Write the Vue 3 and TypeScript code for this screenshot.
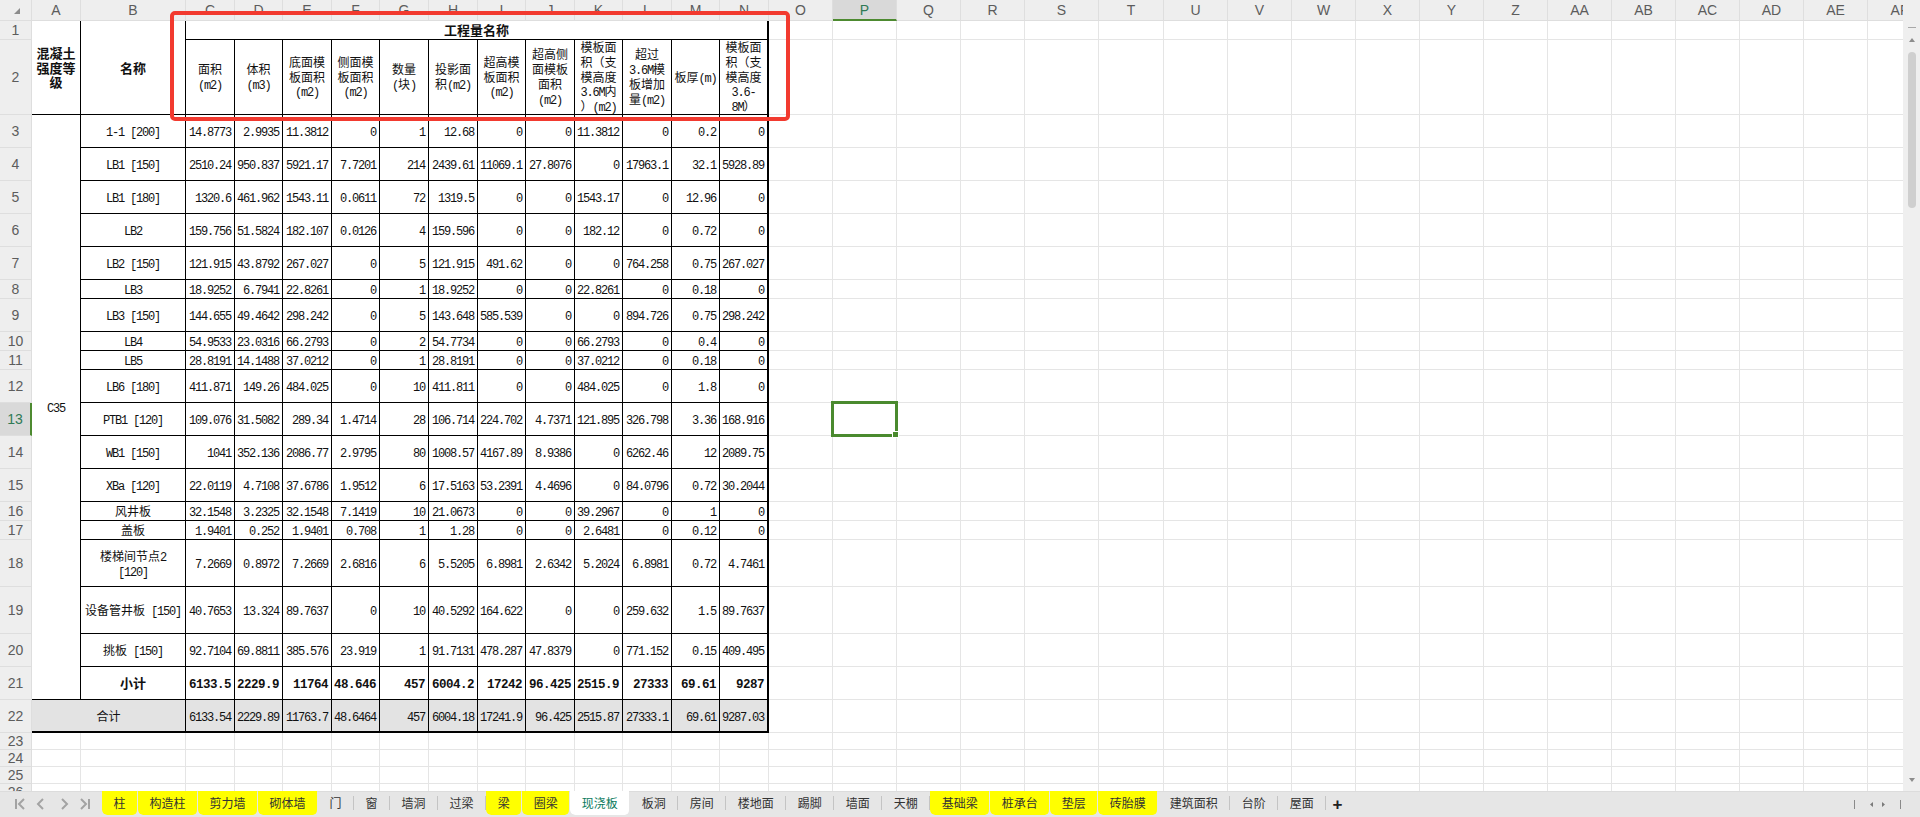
<script setup lang="ts">
interface Cell {
  lines: string[]
  cls: string
  colspan?: number
  rowspan?: number
}

const colNames = 'A B C D E F G H I J K L M N O P Q R S T U V W X Y Z AA AB AC AD AE AF'.split(' ')
const colWidths = [49, 105, 49, 48, 49, 48, 49, 49, 48, 49, 48, 49, 48, 49, 64, 64, 64, 64, 74, 65, 64, 64, 64, 64, 64, 64, 64, 64, 64, 64, 64, 64]
const rowHeights = [19, 75, 33, 33, 33, 33, 33, 19, 33, 19, 19, 33, 33, 33, 33, 19, 19, 47, 47, 33, 33, 33, 17, 17, 17, 17]

const heads: string[][] = [
  ['面积', '(m2)'],
  ['体积', '(m3)'],
  ['底面模', '板面积', '(m2)'],
  ['侧面模', '板面积', '(m2)'],
  ['数量', '(块)'],
  ['投影面', '积(m2)'],
  ['超高模', '板面积', '(m2)'],
  ['超高侧', '面模板', '面积', '(m2)'],
  ['模板面', '积（支', '模高度', '3.6M内', '）(m2)'],
  ['超过', '3.6M模', '板增加', '量(m2)'],
  ['板厚(m)'],
  ['模板面', '积（支', '模高度', '3.6-', '8M）'],
]

const body: [string[], string][] = [
  [['1-1 [200]'], '14.8773 2.9935 11.3812 0 1 12.68 0 0 11.3812 0 0.2 0'],
  [['LB1 [150]'], '2510.24 950.837 5921.17 7.7201 214 2439.61 11069.1 27.8076 0 17963.1 32.1 5928.89'],
  [['LB1 [180]'], '1320.6 461.962 1543.11 0.0611 72 1319.5 0 0 1543.17 0 12.96 0'],
  [['LB2'], '159.756 51.5824 182.107 0.0126 4 159.596 0 0 182.12 0 0.72 0'],
  [['LB2 [150]'], '121.915 43.8792 267.027 0 5 121.915 491.62 0 0 764.258 0.75 267.027'],
  [['LB3'], '18.9252 6.7941 22.8261 0 1 18.9252 0 0 22.8261 0 0.18 0'],
  [['LB3 [150]'], '144.655 49.4642 298.242 0 5 143.648 585.539 0 0 894.726 0.75 298.242'],
  [['LB4'], '54.9533 23.0316 66.2793 0 2 54.7734 0 0 66.2793 0 0.4 0'],
  [['LB5'], '28.8191 14.1488 37.0212 0 1 28.8191 0 0 37.0212 0 0.18 0'],
  [['LB6 [180]'], '411.871 149.26 484.025 0 10 411.811 0 0 484.025 0 1.8 0'],
  [['PTB1 [120]'], '109.076 31.5082 289.34 1.4714 28 106.714 224.702 4.7371 121.895 326.798 3.36 168.916'],
  [['WB1 [150]'], '1041 352.136 2086.77 2.9795 80 1008.57 4167.89 8.9386 0 6262.46 12 2089.75'],
  [['XBa [120]'], '22.0119 4.7108 37.6786 1.9512 6 17.5163 53.2391 4.4696 0 84.0796 0.72 30.2044'],
  [['风井板'], '32.1548 3.2325 32.1548 7.1419 10 21.0673 0 0 39.2967 0 1 0'],
  [['盖板'], '1.9401 0.252 1.9401 0.708 1 1.28 0 0 2.6481 0 0.12 0'],
  [['楼梯间节点2', '[120]'], '7.2669 0.8972 7.2669 2.6816 6 5.5205 6.8981 2.6342 5.2024 6.8981 0.72 4.7461'],
  [['设备管井板 [150]'], '40.7653 13.324 89.7637 0 10 40.5292 164.622 0 0 259.632 1.5 89.7637'],
  [['挑板 [150]'], '92.7104 69.8811 385.576 23.919 1 91.7131 478.287 47.8379 0 771.152 0.15 409.495'],
  [['小计'], '6133.5 2229.9 11764 48.646 457 6004.2 17242 96.425 2515.9 27333 69.61 9287'],
]
const total = '6133.54 2229.89 11763.7 48.6464 457 6004.18 17241.9 96.425 2515.87 27333.1 69.61 9287.03'

const blanks = (n: number): Cell[] => Array.from({ length: n }, () => ({ lines: [], cls: 'blank' }))
const numCells = (vals: string, extra: string): Cell[] =>
  vals.split(' ').map((v, i) => ({ lines: [v], cls: `data num ${extra} ${i === 11 ? 'edge' : ''}` }))

const rows: Cell[][] = [
  [
    { lines: ['混凝土', '强度等', '级'], cls: 'data strong', rowspan: 2 },
    { lines: ['名称'], cls: 'data strong', rowspan: 2 },
    { lines: ['工程量名称'], cls: 'data strong edge', colspan: 12 },
    ...blanks(18),
  ],
  [...heads.map((lines, i) => ({ lines, cls: `data head ${i === 11 ? 'edge' : ''}` })), ...blanks(18)],
  ...body.map(([name, vals], i) => {
    const isSum = i === body.length - 1
    const cells: Cell[] = [
      { lines: name, cls: `data name ${isSum ? 'strong' : ''}` },
      ...numCells(vals, isSum ? 'sum' : ''),
      ...blanks(18),
    ]
    return i === 0 ? [{ lines: ['C35'], cls: 'data name', rowspan: 19 }, ...cells] : cells
  }),
  [{ lines: ['合计'], cls: 'data name total', colspan: 2 }, ...numCells(total, 'total'), ...blanks(18)],
  ...Array.from({ length: 4 }, () => blanks(32)),
]

// ascii runs go in the narrow mono face, the rest stays CJK
const segments = (line: string) =>
  line.split(/([\x20-\x7e]+)/).filter(Boolean).map((text) => ({ text, latin: /^[\x20-\x7e]/.test(text) }))

const tabs = [
  ['柱', 1], ['构造柱', 1], ['剪力墙', 1], ['砌体墙', 1], ['门', 0], ['窗', 0], ['墙洞', 0], ['过梁', 0],
  ['梁', 1], ['圈梁', 1], ['现浇板', 2], ['板洞', 0], ['房间', 0], ['楼地面', 0], ['踢脚', 0], ['墙面', 0],
  ['天棚', 0], ['基础梁', 1], ['桩承台', 1], ['垫层', 1], ['砖胎膜', 1], ['建筑面积', 0], ['台阶', 0], ['屋面', 0],
] as const
</script>

<template>
  <div class="app">
    <div class="workspace">
      <div class="sheet">
        <table class="grid">
          <colgroup>
            <col :style="{ width: '32px' }" />
            <col v-for="(w, i) in colWidths" :key="i" :style="{ width: w + 'px' }" />
          </colgroup>
          <thead>
            <tr class="col-row">
              <th class="corner">
                <svg width="32" height="20" viewBox="0 0 32 20"><polygon points="20,8 20,14 14,14" fill="#8c8c8c" /></svg>
              </th>
              <th v-for="c in colNames" :key="c" class="col-head" :class="{ current: c === 'P' }">{{ c }}</th>
            </tr>
          </thead>
          <tbody>
            <tr v-for="(row, r) in rows" :key="r" :style="{ height: rowHeights[r] + 'px' }">
              <th class="row-head" :class="{ current: r === 12 }"><div class="row-no">{{ r + 1 }}</div></th>
              <td v-for="(cell, c) in row" :key="c" :class="cell.cls" :colspan="cell.colspan" :rowspan="cell.rowspan">
                <div v-for="(line, l) in cell.lines" :key="l" class="line">
                  <span v-for="(seg, s) in segments(line)" :key="s" :class="{ latin: seg.latin }">{{ seg.text }}</span>
                </div>
              </td>
            </tr>
          </tbody>
        </table>
        <div class="selection"><i class="handle"></i></div>
        <div class="callout"></div>
      </div>
      <div class="vscroll">
        <i class="dash"></i>
        <i class="arrow up"></i>
        <i class="thumb"></i>
        <i class="arrow down"></i>
      </div>
    </div>
    <div class="tabbar">
      <svg class="nav" width="102" height="26" viewBox="0 0 102 26" fill="none" stroke="#a3a3a3" stroke-width="2">
        <path d="M16 8v10M24 8l-5 5 5 5" />
        <path d="M43 8l-5 5 5 5" />
        <path d="M62 8l5 5-5 5" />
        <path d="M81 8l5 5-5 5M89 8v10" />
      </svg>
      <div
        v-for="[name, kind] in tabs"
        :key="name"
        class="tab"
        :class="{ marked: kind === 1, active: kind === 2 }"
      >{{ name }}</div>
      <span class="add">+</span>
      <svg class="hscroll" width="66" height="26" viewBox="0 0 66 26">
        <path d="M0.5 9v9M46.5 9v9" stroke="#8a8a8a" fill="none" />
        <path d="M19 11v5l-3-2.500zM28 11v5l3-2.500z" fill="#7a7a7a" />
      </svg>
    </div>
  </div>
</template>

<style scoped>
.app {
  width: 1920px;
  height: 817px;
  display: flex;
  flex-direction: column;
  overflow: hidden;
  font-family: "Noto Sans CJK SC", "Liberation Sans", sans-serif;
  font-size: 12px;
  color: #111;
  background: #fff;
}

.workspace {
  height: 791px;
  display: flex;
}

.sheet {
  position: relative;
  width: 1903px;
  overflow: hidden;
}

.grid {
  table-layout: fixed;
  width: 1931px;
  border-collapse: separate;
  border-spacing: 0;
}

.col-row {
  height: 21px;
}

.corner,
.col-head,
.row-head {
  padding: 0;
  background: #eeeeee;
  font-family: "Liberation Sans", sans-serif;
  font-size: 14px;
  font-weight: 400;
  color: #5c5c5c;
  border-right: 1px solid #dedede;
  border-bottom: 1px solid #dedede;
}

.row-no {
  height: 16px;
  line-height: 16px;
}

.corner svg {
  display: block;
}

.col-head.current {
  background: #d9d9d9;
  color: #2f7a55;
  border-bottom: 2px solid #4d8a30;
}

.row-head.current {
  background: #d9d9d9;
  color: #2f7a55;
  border-right: 2px solid #4d8a30;
}

td {
  padding: 0;
  text-align: center;
  vertical-align: middle;
  white-space: nowrap;
}

.line {
  height: 14.8px;
  line-height: 14.8px;
}

.blank {
  border-right: 1px solid #e5e5e5;
  border-bottom: 1px solid #e5e5e5;
}

.data {
  border-right: 1px solid #000;
  border-bottom: 1px solid #000;
}

.edge {
  border-right-width: 2px;
}

.latin {
  font-family: "Liberation Mono", monospace;
  font-size: 12px;
  letter-spacing: -1.2px;
}

.name,
.num,
.strong {
  padding-top: 1px;
}

.num {
  text-align: right;
  padding-right: 3px;
}

.strong {
  font-size: 13px;
  font-weight: 700;
}

.sum .latin {
  font-size: 12.500px;
  font-weight: 700;
  letter-spacing: -0.5px;
}

.total {
  background: #e3e3e3;
  border-bottom-width: 2px;
}

.selection {
  position: absolute;
  left: 831px;
  top: 401px;
  width: 67px;
  height: 36px;
  box-sizing: border-box;
  border: 3px solid #4a8a2e;
}

.handle {
  position: absolute;
  right: -4px;
  bottom: -4px;
  width: 5px;
  height: 5px;
  background: #4a8a2e;
  border: 1px solid #fff;
}

.callout {
  position: absolute;
  left: 170px;
  top: 11px;
  width: 620px;
  height: 110px;
  box-sizing: border-box;
  border: 4px solid #f23a2f;
  border-radius: 5px;
}

.vscroll {
  width: 17px;
  height: 791px;
  box-sizing: border-box;
  padding-top: 27px;
  display: flex;
  flex-direction: column;
  align-items: center;
  background: #efefef;
}

.dash {
  width: 8px;
  height: 1px;
  background: #a8a8a8;
}

.arrow {
  width: 0;
  height: 0;
  border-left: 3px solid transparent;
  border-right: 3px solid transparent;
}

.arrow.up {
  margin-top: 10px;
  border-bottom: 4px solid #8c8c8c;
}

.arrow.down {
  margin-top: auto;
  margin-bottom: 9px;
  border-top: 4px solid #8c8c8c;
}

.thumb {
  width: 8px;
  height: 156px;
  margin-top: 10px;
  border-radius: 4px;
  background: #cfcfcf;
}

.tabbar {
  height: 26px;
  display: flex;
  background: #e6e6e6;
  border-top: 1px solid #dcdcdc;
  box-sizing: border-box;
}

.nav {
  flex: none;
  margin-top: -1px;
}

.tab {
  position: relative;
  height: 24px;
  margin-top: -1px;
  padding: 0 11.5px;
  border-right: 1px solid transparent;
  border-radius: 0 0 5px 5px;
  line-height: 24px;
  color: #333;
  white-space: nowrap;
  background-clip: padding-box;
}

.tab::after {
  content: "";
  position: absolute;
  right: -1px;
  top: 5px;
  height: 14px;
  width: 1px;
  background: #c4c4c4;
}

.tab.marked {
  background-color: #ffff00;
}

.tab.marked::after,
.tab.active::after {
  display: none;
}

.tab.active {
  background-color: #fff;
  color: #0b7a5c;
}

.add {
  margin-left: 6px;
  font-family: "Liberation Sans", sans-serif;
  font-size: 17px;
  font-weight: 700;
  line-height: 25px;
  color: #222;
}

.hscroll {
  flex: none;
  margin-left: auto;
  margin-top: -1px;
}
</style>
